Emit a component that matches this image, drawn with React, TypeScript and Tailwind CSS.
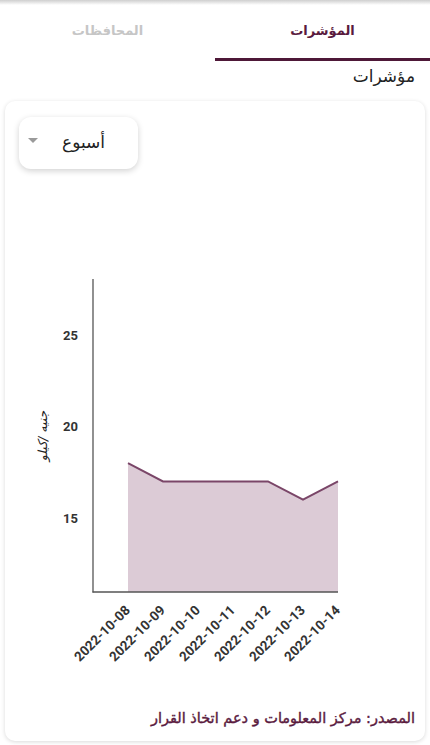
import React from "react";

const pts = [18, 17, 17, 17, 17, 16, 17];
const dates = ["2022-10-08","2022-10-09","2022-10-10","2022-10-11","2022-10-12","2022-10-13","2022-10-14"];
const yOf = (v: number) => 518 - (v - 15) * 18.3;
const xOf = (i: number) => 128 + i * 35;

function Chart() {
  const line = pts.map((v, i) => `${xOf(i)},${yOf(v)}`).join(" ");
  const area = `${xOf(0)},592 ${line} ${xOf(6)},592`;
  return (
    <svg width="420" height="510" className="block" style={{ direction: "ltr" }}>
      <g transform="translate(-5,-169)">
        <polygon points={area} fill="#dccbd6" />
        <polyline points={line} fill="none" stroke="#7a4668" strokeWidth="2" />
        <line x1="93" y1="279" x2="93" y2="592.5" stroke="#555" strokeWidth="1.3" />
        <line x1="92.5" y1="592" x2="338" y2="592" stroke="#555" strokeWidth="1.3" />
        {[25, 20, 15].map((v) => (
          <text key={v} x="78" y={yOf(v) + 4.5} textAnchor="end" fontFamily="Roboto, sans-serif" fontWeight="700" fontSize="13" fill="#333">{v}</text>
        ))}
        <text x="0" y="0" transform="translate(47,436) rotate(-90)" textAnchor="middle" fontFamily="'DejaVu Sans', sans-serif" fontSize="12.5" fill="#222" direction="rtl" fontStyle="italic">جنيه /كيلو</text>
        {dates.map((d, i) => (
          <text key={d} x="0" y="0" transform={`translate(${xOf(i) + 3},${611}) rotate(-45)`} textAnchor="end" fontFamily="Roboto, sans-serif" fontWeight="700" fontSize="13.5" fill="#333">{d}</text>
        ))}
      </g>
    </svg>
  );
}

export default function App() {
  return (
    <div dir="rtl" className="w-[430px] h-[745px] bg-white overflow-hidden" style={{ fontFamily: "'DejaVu Sans', sans-serif" }}>
      <div className="h-[5px] bg-gradient-to-b from-[#cfcfcf] to-white" />
      <div className="flex h-[56px]">
        <div className="flex-1 flex items-center justify-center border-b-[3px] border-[#4e1838]">
          <span className="text-[13px] font-bold text-[#5a1a3e] pb-[2px]">المؤشرات</span>
        </div>
        <div className="flex-1 flex items-center justify-center pb-[3px]">
          <span className="text-[13px] font-bold text-[#c6c6c6] pb-[2px]">المحافظات</span>
        </div>
      </div>
      <div className="pr-[15px] h-[32px] flex items-center text-[17px] text-[#222]">مؤشرات</div>
      <div dir="ltr" className="mt-[8px] mx-[5px] h-[640px] bg-white rounded-[10px] shadow-[0_1px_4px_rgba(0,0,0,0.15)] flex flex-col">
        <div className="pl-[14px] pt-[16px]">
          <div className="w-[119px] h-[52px] rounded-[12px] bg-white shadow-[0_2px_6px_rgba(0,0,0,0.18)] flex items-center pl-[8px]">
            <div className="w-0 h-0 border-l-[5px] border-r-[5px] border-t-[5px] border-l-transparent border-r-transparent border-t-[#9a9a9a] mb-[6px] ml-[1px]" />
            <span dir="rtl" className="ml-[24px] text-[17px] text-[#222]">أسبوع</span>
          </div>
        </div>
        <Chart />
        <div dir="rtl" className="mt-[29px] pr-[10px] text-[14.5px] text-[#5a1a3e] leading-[20px] [-webkit-text-stroke:0.4px_#5a1a3e]">المصدر: مركز المعلومات و دعم اتخاذ القرار</div>
      </div>
    </div>
  );
}
